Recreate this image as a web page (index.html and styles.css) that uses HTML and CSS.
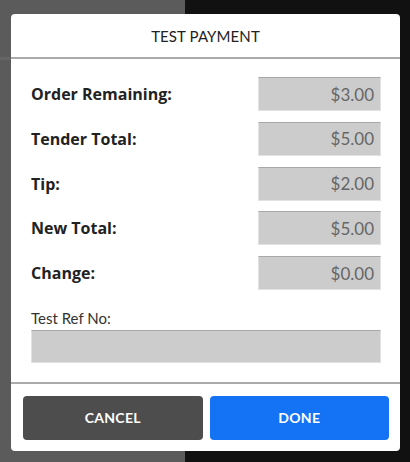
FILE: index.html
```html
<!DOCTYPE html>
<html>
<head>
<meta charset="utf-8">
<link rel="stylesheet" href="styles.css">
</head>
<body>
<div class="backdrop">
  <div class="modal">
    <div class="modal-header">TEST PAYMENT</div>
    <div class="modal-body">
      <div class="row"><span class="label">Order Remaining:</span><div class="field">$3.00</div></div>
      <div class="row"><span class="label">Tender Total:</span><div class="field">$5.00</div></div>
      <div class="row"><span class="label">Tip:</span><div class="field">$2.00</div></div>
      <div class="row"><span class="label">New Total:</span><div class="field">$5.00</div></div>
      <div class="row"><span class="label">Change:</span><div class="field">$0.00</div></div>
      <div class="ref">
        <div class="ref-label">Test Ref No:</div>
        <div class="ref-field"></div>
      </div>
    </div>
    <div class="modal-footer">
      <button class="btn btn-cancel">CANCEL</button>
      <button class="btn btn-done">DONE</button>
    </div>
  </div>
</div>
</body>
</html>
```
FILE: styles.css
```css
html, body {
  margin: 0;
  padding: 0;
}
body {
  width: 410px;
  height: 462px;
  overflow: hidden;
  font-family: "Lato", "Open Sans", sans-serif;
}
.backdrop {
  height: 462px;
  box-sizing: border-box;
  padding: 14px 10px 0 11px;
  background:
    linear-gradient(to bottom, transparent 57px, #666 57px, #666 60px, transparent 60px) 0 0 / 185px 100% no-repeat,
    linear-gradient(to right, #5b5b5b 0, #5b5b5b 185px, #111 185px);
}
.modal {
  width: 389px;
  background: #fff;
  border-radius: 4px;
  display: flex;
  flex-direction: column;
}
.modal-header {
  height: 43px;
  border-bottom: 2px solid #aaa;
  display: flex;
  align-items: center;
  justify-content: center;
  font-size: 15px;
  font-weight: 400;
  color: #222;
  letter-spacing: 0.1px;
}
.modal-body {
  padding: 18px 19px 19px 20px;
  border-bottom: 2px solid #aaa;
  display: flex;
  flex-direction: column;
  gap: 10.75px;
}
.row {
  display: flex;
  align-items: center;
  justify-content: space-between;
  height: 34px;
}
.label {
  font-family: "Open Sans", "Lato", sans-serif;
  font-size: 16px;
  font-weight: 700;
  color: #222;
}
.field {
  width: 123px;
  height: 34px;
  box-sizing: border-box;
  background: #cccccc;
  border: 1px solid #e2e2e2;
  border-top-color: #a8a8a8;
  display: flex;
  align-items: center;
  justify-content: flex-end;
  padding-right: 6px;
  font-size: 17px;
  color: #666;
}
.ref {
  margin-top: 7px;
  display: flex;
  flex-direction: column;
}
.ref-label {
  font-size: 15px;
  font-weight: 400;
  color: #333;
  line-height: 20px;
  margin-bottom: 2px;
}
.ref-field {
  height: 33px;
  box-sizing: border-box;
  background: #cccccc;
  border: 1px solid #e2e2e2;
  border-top-color: #a8a8a8;
}
.modal-footer {
  display: flex;
  gap: 7px;
  padding: 12px 11px 11px 12px;
}
.btn {
  flex: 1;
  height: 44px;
  border: none;
  border-radius: 4px;
  color: #fff;
  font-family: "Lato", "Open Sans", sans-serif;
  font-weight: 700;
  font-size: 14px;
  letter-spacing: 0.3px;
}
.btn-cancel {
  background: #4d4d4d;
}
.btn-done {
  background: #1473f5;
}
```
